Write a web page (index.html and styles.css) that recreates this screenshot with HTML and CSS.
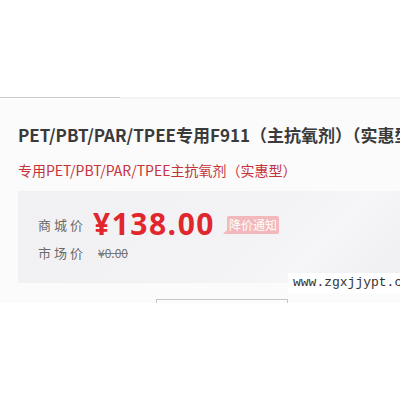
FILE: index.html
```html
<!DOCTYPE html>
<html lang="zh">
<head>
<meta charset="utf-8">
<link rel="stylesheet" href="styles.css">
</head>
<body>
<div class="page">
  <div class="topline"><span class="topline-left"></span><span class="topline-right"></span></div>
  <div class="panel">
    <h1 class="title">PET/PBT/PAR/TPEE专用F911（主抗氧剂）（实惠型）</h1>
    <p class="subtitle">专用PET/PBT/PAR/TPEE主抗氧剂（实惠型）</p>
    <div class="pricebox">
      <div class="row row-main">
        <span class="label">商城价</span>
        <span class="price">¥138.00</span>
        <span class="badge">降价通知</span>
      </div>
      <div class="row row-market">
        <span class="label">市场价</span>
        <span class="old">¥0.00</span>
      </div>
    </div>
    <div class="bracket-row"><span class="bracket"></span></div>
  </div>
  <div class="watermark">www.zgxjjypt.com</div>
</div>
</body>
</html>
```
FILE: styles.css
```css
html, body {
  margin: 0;
  padding: 0;
  background: #fff;
  font-family: "Noto Sans CJK SC", "Noto Sans", sans-serif;
}
.page {
  position: relative;
  width: 400px;
  height: 400px;
  overflow: hidden;
  padding-top: 97px;
  box-sizing: border-box;
}
.topline {
  display: flex;
  height: 2px;
}
.topline-left {
  width: 120px;
  border-top: 1px solid #c9c9c9;
}
.topline-right {
  flex: 1;
  background: #f3f3f3;
}
.panel {
  background: #fbfbfb;
  padding: 23px 0 0 18px;
  height: 204px;
  box-sizing: border-box;
}
.title {
  margin: 0;
  font-size: 17px;
  line-height: 26px;
  font-weight: bold;
  color: #3a3a3a;
  white-space: nowrap;
}
.subtitle {
  margin: 12px 0 0;
  font-size: 14px;
  line-height: 20px;
  color: #c4333a;
  white-space: nowrap;
}
.pricebox {
  margin-top: 11px;
  height: 92px;
  background: linear-gradient(135deg, #f1f1f3 0%, #f3f3f5 60%, #f6f6f8 75%, #f1f1f3 90%);
  padding: 16px 0 0 20px;
  box-sizing: border-box;
}
.row {
  display: flex;
  align-items: center;
}
.label {
  width: 55px;
  font-size: 13px;
  letter-spacing: 3px;
  color: #6a6a6a;
}
.price {
  font-size: 30px;
  line-height: 34px;
  font-weight: bold;
  color: #e1262e;
  font-family: "Open Sans", "Noto Sans", sans-serif;
  letter-spacing: 1.5px;
}
.badge {
  position: relative;
  margin-left: 12px;
  margin-top: 2px;
  background: #f2b8bb;
  color: #fff;
  font-size: 12px;
  line-height: 18px;
  padding: 0 2px;
  border-radius: 2px;
}
.badge::after {
  content: "";
  position: absolute;
  left: -4px;
  bottom: 0;
  border-right: 5px solid #f2b8bb;
  border-top: 5px solid transparent;
}
.row-market {
  margin-top: 2px;
}
.old {
  font-size: 12px;
  color: #777;
  text-decoration: line-through;
  margin-left: 5px;
}
.bracket-row {
  padding: 16px 0 0 138px;
}
.bracket {
  display: block;
  width: 130px;
  height: 3px;
  border: 1px solid #c9c4cc;
  border-bottom: none;
}
.watermark {
  position: absolute;
  left: 288px;
  top: 273px;
  background: #fff;
  padding: 1px 0 2px 5px;
  font-family: "Liberation Mono", monospace;
  font-size: 13px;
  line-height: 17px;
  color: #333;
  white-space: nowrap;
}
```
